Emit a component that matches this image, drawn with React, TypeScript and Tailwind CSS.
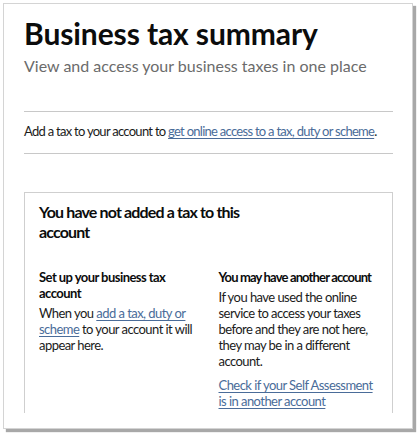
import React from "react";

const linkCls = "text-[#4a6c99] underline underline-offset-2 decoration-1";

export default function App() {
  return (
    <div className="w-[420px] h-[437px] bg-white pt-[3px] pl-[3px]" style={{ fontFamily: "Lato, 'Liberation Sans', sans-serif" }}>
      <div className="w-[410px] h-[426px] border border-[#d4d4d4] bg-white shadow-[3px_3px_1px_#a8a8a8] pl-[20px] pr-[19px] overflow-hidden">
        <h1 className="mt-[12px] text-[30px] leading-[34px] font-bold text-[#0b0c0c] tracking-[-0.1px]">Business tax summary</h1>
        <p className="mt-[6px] text-[16px] leading-[20px] text-[#6b6b6b]">View and access your business taxes in one place</p>
        <div className="mt-[35px] border-t border-[#c8c8c8]" />
        <p className="pt-[11px] pb-[14px] text-[13px] leading-[16px] tracking-[-0.72px] text-[#1b1b1b] whitespace-nowrap">
          Add a tax to your account to <a className={linkCls}>get online access to a tax, duty or scheme</a>.
        </p>
        <div className="border-t border-[#c8c8c8]" />
        <div className="mt-[38px] h-[221px] border border-b-0 border-[#cfcfcf] px-[14px] pt-[9px]">
          <h2 className="text-[16px] leading-[20px] font-bold text-[#0b0c0c] tracking-[-0.85px] w-[220px]">You have not added a tax to this account</h2>
          <div className="mt-[27px] grid grid-cols-2 gap-x-[20px] text-[13px] leading-[16px] tracking-[-0.55px]">
            <div>
              <h3 className="font-bold text-[#0b0c0c] tracking-[-0.55px]">Set up your business tax account</h3>
              <p className="mt-[4px] text-[#1b1b1b]">
                When you <a className={linkCls}>add a tax, duty or scheme</a> to your account it will appear here.
              </p>
            </div>
            <div>
              <h3 className="font-bold text-[#0b0c0c] tracking-[-0.85px] whitespace-nowrap">You may have another account</h3>
              <p className="mt-[4px] text-[#1b1b1b]">
                If you have used the online service to access your taxes before and they are not here, they may be in a different account.
              </p>
              <p className="mt-[8px]">
                <a className={linkCls}>Check if your Self Assessment is in another account</a>
              </p>
            </div>
          </div>
        </div>
      </div>
    </div>
  );
}
